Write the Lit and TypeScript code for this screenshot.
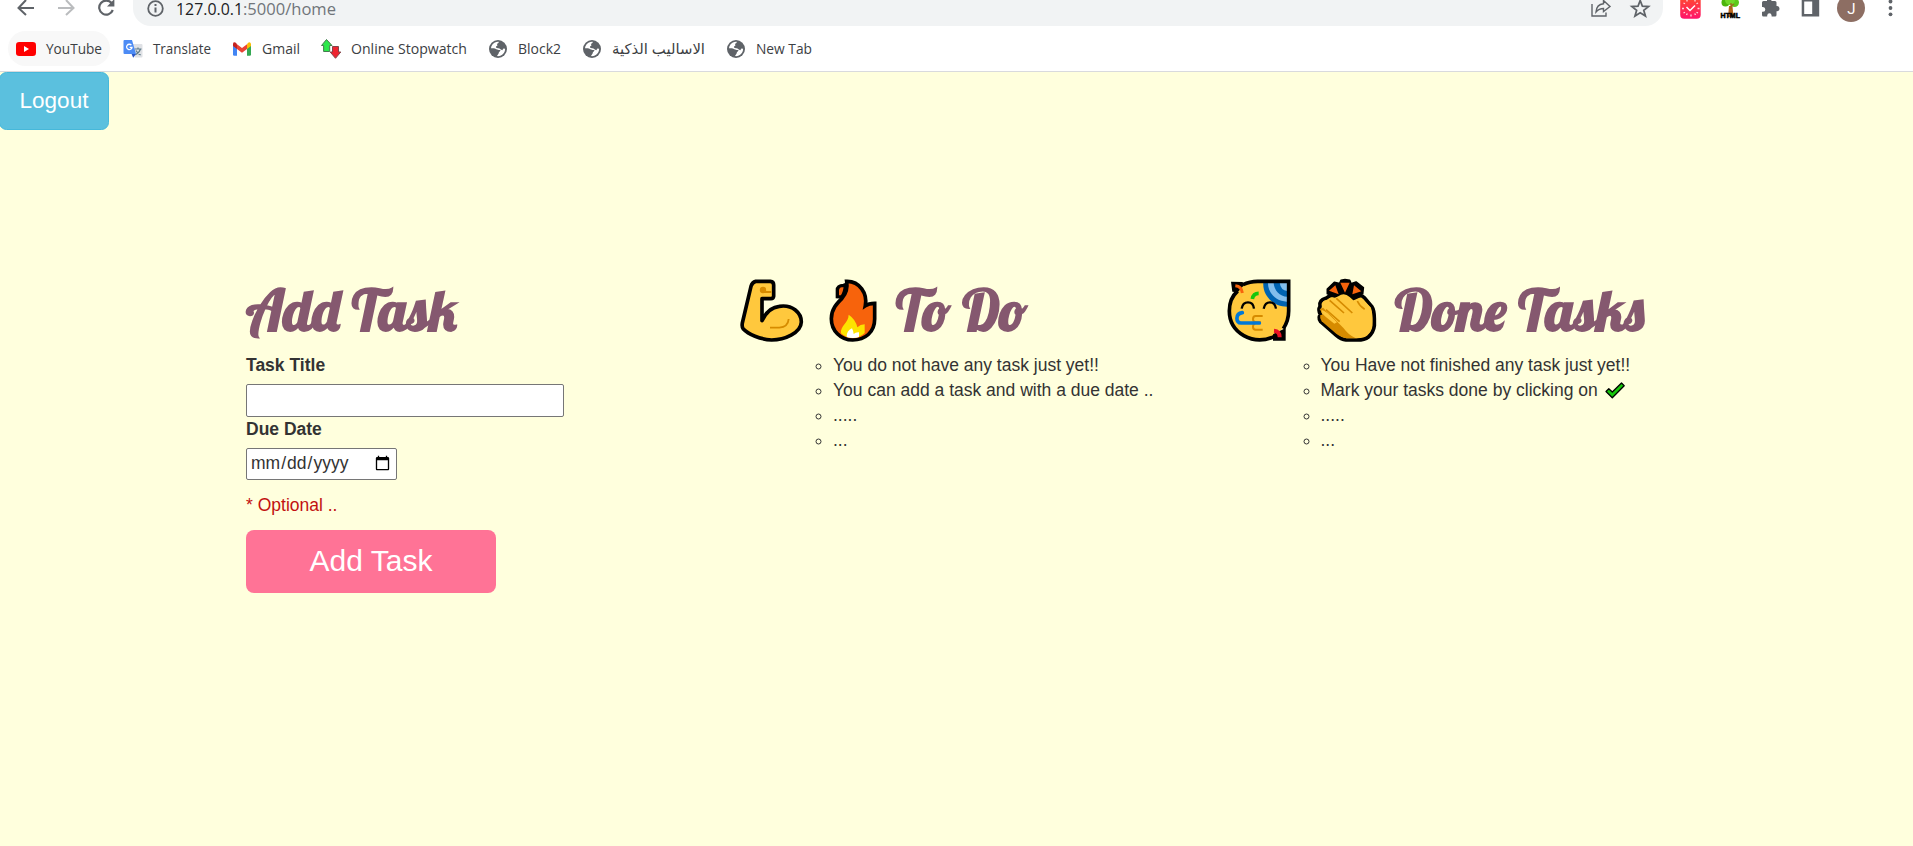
import { LitElement, html, svg, css, TemplateResult } from "lit";
import { customElement, property } from "lit/decorators.js";

/** One line of text condensed or stretched to a given width. */
@customElement("fit-text")
class FitText extends LitElement {
  @property() text = "";
  @property({ type: Number }) width = 100;
  @property({ type: Number }) height = 24;
  @property({ type: Number }) base = 18;
  static styles = css`
    :host { display: block; flex: none; }
    svg { display: block; overflow: visible; }
    text { fill: currentColor; }
  `;
  render() {
    return html`<svg width=${this.width} height=${this.height}>
      <text x="0" y=${this.base} textLength=${this.width} lengthAdjust="spacingAndGlyphs">${this.text}</text>
    </svg>`;
  }
}

const globe = svg`<circle cx="10" cy="10" r="9" fill="#5f6368"/>
  <path d="M10 2.8C8 2.8 4.6 4.2 3.3 7.4L3 9.3C5 9 7 9 8.2 10.2C9.6 10 10 11.3 12.4 11.1C12.8 12.4 10.7 12.6 10.6 14.5L9 17.1C14 17.6 17.2 13.8 17.1 9.8L15.4 9.6L14.3 11.2C12.8 10.8 12.2 9.3 10.3 9.2C8.2 9.3 7.4 8.3 8.2 7.3C9.6 7.2 9.7 6 9 5.2C9.4 4.2 10.8 4.6 10.8 2.8Z" fill="#fff"/>
  <path d="M3 10.6C3 13.7 5 16.2 7.7 16.9L7.8 14.8C6 14.4 5.9 12.5 6 11.4Z" fill="#5f6368"/>`;

const youtube = svg`<rect x="0" y="3" width="20" height="14" rx="3.2" fill="#f00"/><path d="M8 7v6l5-3z" fill="#fff"/>`;
const translate = svg`<path d="M8 5h10.5q1 0 1 1v11.5q0 1-1 1H12z" fill="#dfe1e5"/>
  <path d="M11.5 10h7M15 8.5V10M17.4 10.3q-1.5 4-5 5.4M13 11.5q1.4 3 4.6 4.4" stroke="#607d8b" stroke-width="1.2" fill="none"/>
  <path d="M1.5 1H9l4 14H1.5Q.5 15 .5 14V2Q.5 1 1.5 1Z" fill="#4c8bf5"/><path d="M8.6 15H13l-2.800 3.800z" fill="#2a56c6"/>
  <path d="M8.4 6.2A2.7 2.7 0 1 0 9 8.3H6.6" stroke="#fff" stroke-width="1.3" fill="none"/>`;
const gmail = svg`<path d="M1 5v10.5q0 1.2 1.2 1.2H5V8z" fill="#4285f4"/><path d="M19 5v10.5q0 1.2-1.2 1.2H15V8z" fill="#34a853"/>
  <path d="M15 5.2V10l4-3V4.8q-.7-2.4-2.9-1z" fill="#fbbc04"/><path d="M5 10V5.2l5 3.8 5-3.8V10l-5 3.8z" fill="#ea4335"/><path d="M1 7l4 3V5.2L3.9 3.8Q1.400 2.500 1 4.800Z" fill="#c5221f"/>`;
const stopwatch = svg`<path d="M5.500 .5L11 6.500H8.700V12.500H2.600V6.500H.5Z" fill="#2ce84b" stroke="#477a50" stroke-width="1"/>
  <path d="M11.500 7.500H17.500v5.500h2.300L14.500 19.300L9.200 13h2.300Z" fill="#ee2430" stroke="#84464a" stroke-width="1"/>`;

const bookmarks: { label: string; width: number; icon: TemplateResult; hot?: boolean }[] = [
  { label: "YouTube", width: 56, icon: youtube as any, hot: true },
  { label: "Translate", width: 58, icon: translate as any },
  { label: "Gmail", width: 38, icon: gmail as any },
  { label: "Online Stopwatch", width: 116, icon: stopwatch as any },
  { label: "Block2", width: 43, icon: globe as any },
  { label: "الاساليب الذكية", width: 93, icon: globe as any },
  { label: "New Tab", width: 56, icon: globe as any },
];

@customElement("browser-chrome")
class BrowserChrome extends LitElement {
  static styles = css`
    :host { display: block; height: 71px; background: #fff; border-bottom: 1px solid #d9dadd;
      font-family: "Open Sans", "Noto Sans", "DejaVu Sans", sans-serif; }
    svg { display: block; flex: none; overflow: visible; }
    .bar { display: flex; height: 26px; }
    .nav { display: flex; width: 133px; padding-left: 16px; box-sizing: border-box; gap: 20px; }
    .address { width: 1530px; height: 26px; box-sizing: border-box; background: #f1f3f4; border-radius: 0 0 18px 18px / 0 0 18px 18px;
      display: flex; align-items: flex-start; padding-left: 12px; font-size: 17px; }
    .info { margin-right: 11px; }
    .host { color: #202124; }
    .path { color: #70757a; }
    .spacer { flex: 1; }
    .share { margin-right: 18px; }
    .star { margin-right: 12px; }
    .tools { display: flex; padding-left: 16px; gap: 16px; }
    .marks { display: flex; height: 45px; padding: 5px 0 0 8px; box-sizing: border-box; }
    .mark { display: flex; align-items: center; height: 35px; gap: 10px; padding: 0 8px; margin-right: 5px; border-radius: 18px; font-size: 14.5px; color: #3c4043; box-sizing: border-box; }
    .hot { background: #f8f8f8; }
  `;
  render() {
    return html`
      <div class="bar">
        <div class="nav">
          <svg width="20" height="20"><path d="M18 8H3M10 0L2.500 8L10 15" stroke="#5f6368" stroke-width="2" fill="none"/></svg>
          <svg width="20" height="20"><path d="M2 8H17M10 0L17.500 8L10 15" stroke="#babcbe" stroke-width="2" fill="none"/></svg>
          <svg width="20" height="20"><path d="M15.700 3.200A7 7 0 1 0 16.800 10" stroke="#5f6368" stroke-width="2.200" fill="none"/><path d="M18.400-1V6.400H11z" fill="#5f6368"/></svg>
        </div>
        <div class="address">
          <svg class="info" width="20" height="20"><circle cx="10.500" cy="8.500" r="7.300" fill="none" stroke="#5f6368" stroke-width="1.800"/><path d="M10.500 4v2M10.500 7.500v5" stroke="#5f6368" stroke-width="2"/></svg>
          <fit-text class="host" text="127.0.0.1" .width=${67} .base=${15}></fit-text>
          <fit-text class="path" text=":5000/home" .width=${93} .base=${15}></fit-text>
          <span class="spacer"></span>
          <svg class="share" width="20" height="20"><path d="M1 4V16H15V12.500" stroke="#5f6368" stroke-width="1.400" fill="none"/><path d="M5 12Q5.500 4.500 12.500 3.800V.500L19 6.500L12.500 11.500V8.500Q8 8.500 5 12Z" stroke="#5f6368" stroke-width="1.400" fill="none"/></svg>
          <svg class="star" width="22" height="20"><path d="M11.200 0.500L13.400 6.200L19.500 6.600L14.800 10.400L16.400 16L11.200 12.800L6 16L7.600 10.400L2.900 6.600L9 6.200Z" stroke="#5f6368" stroke-width="1.800" fill="none"/></svg>
        </div>
        <div class="tools">
          <svg width="24" height="20">
            <defs><linearGradient id="g" x2="0" y2="1"><stop stop-color="#ff4f2b"/><stop offset="1" stop-color="#ff146c"/></linearGradient></defs>
            <rect x="1.200" y="-4" width="20.500" height="22.800" rx="4" fill="url(#g)"/>
            <path d="M7.500 7l3.500 3.500L16 5.500" stroke="#fff" stroke-width="1.500" fill="none"/>
            <path d="M3 8.500h2M18.500 8.500h2M12 14.500v2M4.500 3l1.500 .8M19 3l-1.500 .8M7.500 15l.8-1.500M16.500 15l-.8-1.500M4.500 13l1.500-.8M19 13l-1.500-.8M8 0v1.500M16 0v1.500" stroke="#ffd6df" stroke-width="1.300"/>
          </svg>
          <svg width="24" height="20"><path d="M10 6h3.500l1 11H9z" fill="#b9651c"/><circle cx="6.500" cy="2.500" r="4" fill="#4cb50c"/><circle cx="15.500" cy="2.500" r="4.500" fill="#5cc81a"/><circle cx="11" cy="0" r="5" fill="#70d829"/><path d="M12 9V3M12 6l3-2" stroke="#a1621e" stroke-width="1.300"/>
            <text x="1.500" y="17.500" font-size="6.800" font-family="Liberation Sans" font-weight="700" textLength="19.500" lengthAdjust="spacingAndGlyphs" stroke="#000" stroke-width=".5">HTML</text></svg>
          <svg width="24" height="20"><path d="M3 2.500Q3 1 4.500 1H8V-1Q8.200-3 10.200-3T12.400-1V1H16Q17.500 1 17.500 2.500V6H18.300Q20.500 6.300 20.500 8.700T18.300 11.200H17.500V15Q17.500 16.600 16 16.600H12.600V15.600Q12.400 13.300 10.400 13.300T8.200 15.600V16.600H4.500Q3 16.600 3 15V11.800H4Q6.300 11.500 6.300 9.400T4 7H3Z" fill="#5f6368"/></svg>
          <svg width="24" height="20"><path d="M2.700-1H20.200V16.500H2.700Z" fill="#5f6368"/><path d="M5.200 1.500H13.200V14H5.200Z" fill="#fff"/></svg>
          <svg width="28" height="24"><circle cx="12" cy="8" r="14" fill="#8d6e63"/><text x="12.500" y="13.500" text-anchor="middle" font-size="15" fill="#fff" font-family="Roboto">J</text></svg>
          <svg width="24" height="20"><g fill="#5f6368"><circle cx="7.500" cy="1.500" r="1.900"/><circle cx="7.500" cy="8" r="1.900"/><circle cx="7.500" cy="14.300" r="1.900"/></g></svg>
        </div>
      </div>
      <div class="marks">
        ${bookmarks.map((b) => html`<div class="mark ${b.hot ? "hot" : ""}">
          <svg width="20" height="20">${b.icon}</svg>
          <fit-text .text=${b.label} .width=${b.width} .height=${20} .base=${15}></fit-text>
        </div>`)}
      </div>`;
  }
}

const arm = html`<svg width="64" height="64" viewBox="60 28 192 192">
  <path d="M107 35H151Q161 36 161 46V80Q160 87 153 87H126V153Q145 113 178 110C218 104 244 130 244 157C243 190 193 211 155 211C120 209 85 194 70 178Q65 172 67 160L93 50Q97 37 107 35Z" fill="#ffc83d" stroke="#000" stroke-width="11" stroke-linejoin="round"/>
  <path d="M130 67H154M150 174H178Q204 172 206 148" stroke="#d68b00" stroke-width="5.500" fill="none"/><circle cx="129" cy="61" r="9.500" fill="#d68b00"/></svg>`;
const fire = html`<svg width="48" height="64" viewBox="328 28 144 192">
  <path d="M372 47Q353 47 353 62V81L366 82Q377 67 377 45Z" fill="#f7630c" stroke="#000" stroke-width="10"/>
  <path d="M381 35C420 34 444 72 437 108Q447 101 465 101V148C465 188 436 211 399 211C362 211 335 182 335 147C335 118 352 101 367 86C382 69 384 54 381 35Z" fill="#f7630c" stroke="#000" stroke-width="11"/>
  <path d="M387 135Q408 149 413 173Q422 164 435 164V190Q419 205 399 205Q379 205 364 191C361 168 387 159 387 135Z" fill="#fde300"/>
  <path d="M397 176Q401 184 402 193Q408 187 418 188V202Q400 208 381 202Q380 184 397 176Z" fill="#fff"/></svg>`;
const party = html`<svg width="64" height="64" viewBox="52 28 192 192">
  <path d="M100 45C118 36 131 35 144 35H237V124C237 141 232 160 220 176L191 201C130 227 59 188 59 124C59 99 68 78 82 64Z" fill="#ffc83d"/>
  <path d="M161 39H233V111C190 111 158 78 161 39Z" fill="#0063b1"/>
  <path d="M175 39H233V96C201 97 174 70 175 39Z" fill="#83beec"/><path d="M192 39H233V81C210 81 193 61 192 39Z" fill="#0063b1"/><path d="M210 39H233V64Q213 62 210 39Z" fill="#83beec"/>
  <path d="M100 45C118 36 131 35 144 35H237V124C237 141 232 160 221 177M193 201C130 229 59 190 59 124C59 99 68 78 84 64" fill="none" stroke="#000" stroke-width="11"/>
  <path d="M64 36L98 37L106 44L98 52L84 68L68 66Z" fill="#000"/><path d="M77 48Q96 50 98 70" fill="none" stroke="#f7630c" stroke-width="9"/>
  <path d="M96 117Q99 98 115 98T133 117M162 117Q166 98 181 98T199 117" stroke="#000" stroke-width="7" fill="none"/>
  <path d="M128 88Q131 71 147 71" stroke="#16c60c" stroke-width="11" fill="none"/>
  <path d="M159 139H138Q130 139 130 149Q130 158 143 158H154M143 159Q130 160 130 171Q130 180 138 180H159" stroke="#d68b00" stroke-width="6" fill="none"/>
  <path d="M98 129C76 132 78 160 94 160H149" stroke="#0078d7" stroke-width="11" stroke-linecap="round" fill="none"/>
  <path d="M228 175V213H190V194Z" fill="#000"/><path d="M193 183Q210 184 210 203" stroke="#e81224" stroke-width="12" fill="none"/></svg>`;
const clap = html`<svg width="60" height="64" viewBox="320 28 180 192">
  <path d="M351 58L372 38L388 42L392 32L404 30L418 32L422 42L437 37L459 54L457 72L430 80L376 80L351 72Z" fill="#000" stroke="#000" stroke-width="5" stroke-linejoin="round"/>
  <path d="M348 85Q360 74 373 80L386 76Q397 65 410 74L425 88L443 80Q453 74 462 84L484 110Q492 122 492 147V168Q490 188 474 202Q463 211 441 211H407Q392 209 378 197L331 156Q322 143 331 136Q322 121 329 111Q324 92 348 85Z" fill="#ffc83d" stroke="#000" stroke-width="11" stroke-linejoin="round"/>
  <path d="M330 136L345 134L415 185L441 206H410Q393 205 376 191L334 155Q327 146 330 136Z" fill="#d68b00"/>
  <path d="M328 118L345 112L400 160L425 190L400 180L345 138Q332 128 328 118Z" fill="#d68b00"/>
  <path d="M334 102Q342 88 352 93L372 117L425 188L408 178L347 124Q338 115 334 102Z" fill="#ffc83d"/>
  <path d="M333 120Q341 122 352 131L380 158L372 162L343 139Q334 130 333 120Z" fill="#ffc83d"/>
  <path d="M353 94Q356 79 374 84L384 80Q401 67 418 82L438 100L441 91Q452 81 460 91L482 114Q488 145 485 170Q480 205 435 205Q415 197 400 176L352 127Z" fill="#ffc83d"/>
  <path d="M358 92L401 130M378 86L426 130M347 120L388 156M441 94Q448 110 463 119" stroke="#d68b00" stroke-width="5" fill="none"/>
  <path d="M356 63L375 47L385 74ZM390 39H418L404 69ZM431 47L453 65L426 74Z" fill="#f7630c"/></svg>`;

@customElement("app-root")
class AppRoot extends LitElement {
  static styles = css`
    :host { display: block; height: 846px; overflow: hidden; background: #ffffdd; color: #333;
      font: 17.5px/25px "Liberation Sans", Arial, sans-serif; }
    svg { display: block; flex: none; overflow: visible; }
    .logout { display: block; box-sizing: border-box; width: 110px; height: 58px; margin-left: -1px; padding: 0; border: 1px solid #46b8da; border-radius: 7.5px;
      background: #5bc0de; color: #fff; font: 22.5px "Liberation Sans", Arial, sans-serif; }
    .columns { display: grid; grid-template-columns: repeat(3, 487.500px); padding: 148px 0 0 246px; }
    .head { display: flex; height: 75px; padding-top: 1px; box-sizing: border-box; color: #85586f; }
    .todo { padding-left: 6.500px; }
    .done { padding-left: 6.300px; }
    .fire { margin: 0 18.700px 0 25.300px; }
    .clap { margin: 0 18.500px 0 25.300px; }
    .title { font: 700 56px "Lobster", "Liberation Serif", serif; }
    label { display: block; height: 25px; font-weight: 700; }
    input { display: block; box-sizing: border-box; border: 1px solid #767676; border-radius: 2px; background: #fff; color: #333; font: 17.5px "Liberation Sans", Arial, sans-serif; padding: 1px 3px; margin: 0; }
    .text { width: 318px; height: 33px; margin: 6px 0 0; }
    .date { width: 151px; height: 32px; margin: 6px 0 13px; padding-bottom: 2px; }
    .note { color: #c21010; }
    .add { display: block; width: 250px; height: 63px; margin-top: 12px; padding: 0 0 2px; border: 0; border-radius: 8px; background: #ff7396; color: #fff; font: 30px "Liberation Sans", Arial, sans-serif; }
    ul { margin: 0; padding-left: 99.500px; list-style: circle; }
    li { height: 25px; white-space: nowrap; }
    .check { display: inline-block; margin-left: 2px; vertical-align: -3px; }
  `;
  render() {
    return html`
      <browser-chrome></browser-chrome>
      <button class="logout">Logout</button>
      <main class="columns">
        <section>
          <div class="head"><fit-text class="title" text="Add Task" .width=${210.5} .height=${74} .base=${52}></fit-text></div>
          <label>Task Title</label>
          <input class="text" type="text" />
          <label>Due Date</label>
          <input class="date" type="date" />
          <div class="note">* Optional ..</div>
          <button class="add">Add Task</button>
        </section>
        <section>
          <div class="head todo">${arm}<div class="fire">${fire}</div>
            <fit-text class="title" text="To Do" .width=${131} .height=${74} .base=${52}></fit-text></div>
          <ul><li>You do not have any task just yet!!</li><li>You can add a task and with a due date ..</li><li>.....</li><li>...</li></ul>
        </section>
        <section>
          <div class="head done">${party}<div class="clap">${clap}</div>
            <fit-text class="title" text="Done Tasks" .width=${249} .height=${74} .base=${52}></fit-text></div>
          <ul><li>You Have not finished any task just yet!!</li>
            <li>Mark your tasks done by clicking on <svg class="check" width="20" height="17" viewBox="0 0 20 17"><path d="M1 9.500L3.800 6.800L7.300 10L16.500 1L19.200 3.700L7.300 15.800Z" fill="#16c60c" stroke="#000" stroke-width="1.300" stroke-linejoin="round"/></svg></li>
            <li>.....</li><li>...</li></ul>
        </section>
      </main>`;
  }
}
